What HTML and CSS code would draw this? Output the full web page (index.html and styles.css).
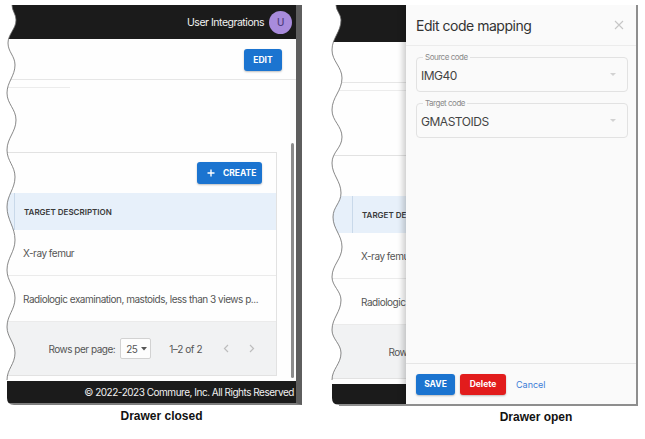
FILE: index.html
```html
<!DOCTYPE html>
<html lang="en">
<head>
<meta charset="utf-8">
<title>Code mapping drawer</title>
<link rel="stylesheet" href="styles.css">
</head>
<body>
<div class="figures">
  <figure class="fig fig-closed">
    <div class="shot shot-closed">
      <div class="page">
        <header class="topbar">
          <span class="user-name">User Integrations</span>
          <span class="avatar">U</span>
        </header>
        <div class="toolbar"><button class="btn btn-edit">EDIT</button></div>
        <div class="tabline"></div>
        <section class="card">
          <div class="card-actions">
            <button class="btn btn-create"><svg width="8" height="8" viewBox="0 0 8 8"><path d="M4 0.5v7M0.5 4h7" stroke="#fff" stroke-width="1.4"/></svg><span>CREATE</span></button>
          </div>
          <div class="row row-head"><div class="lead"></div><div class="cell">TARGET DESCRIPTION</div></div>
          <div class="row"><div class="lead"></div><div class="cell">X-ray femur</div></div>
          <div class="row"><div class="lead"></div><div class="cell">Radiologic examination, mastoids, less than 3 views p...</div></div>
          <div class="pager">
            <span class="pager-label">Rows per page:</span>
            <span class="pager-select">25<svg width="6" height="4" viewBox="0 0 6 4"><path d="M0 0h6L3 3.5z" fill="#555"/></svg></span>
            <span class="pager-count">1–2 of 2</span>
            <svg class="chev" width="6" height="9" viewBox="0 0 6 9"><path d="M5 1L1.5 4.5 5 8" fill="none" stroke="#bdbdbd" stroke-width="1.2"/></svg>
            <svg class="chev" width="6" height="9" viewBox="0 0 6 9"><path d="M1 1l3.5 3.5L1 8" fill="none" stroke="#bdbdbd" stroke-width="1.2"/></svg>
          </div>
        </section>
        <footer class="page-footer">© 2022-2023 Commure, Inc. All Rights Reserved</footer>
      </div>
      <div class="scroll-thumb"></div>
    </div>
    <svg class="torn" width="30" height="410" viewBox="0 0 30 410">
      <path class="torn-fill" d="M0,0 H12 V5 C12,11 16,14 16,20 C16,29 8,34 8,43 C8,52 15,56 15,65 C15,76 7,82 7,93 C7,104 16,109 16,120 C16,132 7,138 7,150 C7,161 15,166 15,177 C15,189 7,195 7,207 C7,220 15,227 15,240 C15,252 7,258 7,270 C7,281 15,287 15,298 C15,310 7,315 7,327 C7,337 15,343 15,353 C15,364 7,369 7,380 L7,398 Q7,405 14,405 V410 H0 Z"/>
      <path class="torn-line" d="M12,5 C12,11 16,14 16,20 C16,29 8,34 8,43 C8,52 15,56 15,65 C15,76 7,82 7,93 C7,104 16,109 16,120 C16,132 7,138 7,150 C7,161 15,166 15,177 C15,189 7,195 7,207 C7,220 15,227 15,240 C15,252 7,258 7,270 C7,281 15,287 15,298 C15,310 7,315 7,327 C7,337 15,343 15,353 C15,364 7,369 7,380"/>
    </svg>
    <figcaption class="caption">Drawer closed</figcaption>
  </figure>

  <figure class="fig fig-open">
    <div class="shot shot-open">
      <div class="page">
        <header class="topbar"></header>
        <div class="toolbar"></div>
        <div class="tabline"></div>
        <section class="card">
          <div class="card-actions"></div>
          <div class="row row-head"><div class="lead"></div><div class="cell">TARGET DESCRIPTION</div></div>
          <div class="row"><div class="lead"></div><div class="cell">X-ray femur</div></div>
          <div class="row"><div class="lead"></div><div class="cell">Radiologic examination</div></div>
          <div class="pager">
            <span class="pager-label">Rows per page:</span>
            <span class="pager-select">25<svg width="6" height="4" viewBox="0 0 6 4"><path d="M0 0h6L3 3.5z" fill="#555"/></svg></span>
            <span class="pager-count">1–2 of 2</span>
            <svg class="chev" width="6" height="9" viewBox="0 0 6 9"><path d="M5 1L1.5 4.5 5 8" fill="none" stroke="#bdbdbd" stroke-width="1.2"/></svg>
            <svg class="chev" width="6" height="9" viewBox="0 0 6 9"><path d="M1 1l3.5 3.5L1 8" fill="none" stroke="#bdbdbd" stroke-width="1.2"/></svg>
          </div>
        </section>
        <footer class="page-footer"></footer>
      </div>

      <aside class="drawer">
        <div class="drawer-head">
          <h2 class="drawer-title">Edit code mapping</h2>
          <svg class="drawer-close" width="10" height="10" viewBox="0 0 10 10"><path d="M1 1l8 8M9 1l-8 8" stroke="#c6c6c6" stroke-width="1.1"/></svg>
        </div>
        <div class="drawer-body">
          <div class="field">
            <span class="field-label">Source code</span>
            <span class="field-value">IMG40</span>
            <svg class="field-caret" width="6" height="4" viewBox="0 0 6 4"><path d="M0 0h6L3 3z" fill="#d2d2d2"/></svg>
          </div>
          <div class="field">
            <span class="field-label">Target code</span>
            <span class="field-value">GMASTOIDS</span>
            <svg class="field-caret" width="6" height="4" viewBox="0 0 6 4"><path d="M0 0h6L3 3z" fill="#d2d2d2"/></svg>
          </div>
        </div>
        <div class="drawer-foot">
          <button class="btn btn-save">SAVE</button>
          <button class="btn btn-delete">Delete</button>
          <button class="btn-text">Cancel</button>
        </div>
      </aside>
    </div>
    <svg class="torn" width="30" height="410" viewBox="318 0 30 410">
      <path class="torn-fill" d="M318,0 H336 V5 C336,11 341,14 341,20 C341,32 332,38 332,50 C332,61 342,67 342,78 C342,91 332,97 332,110 C332,121 342,126 342,137 C342,148 332,152 332,163 C332,175 341,181 341,193 C341,203 333,207 333,217 C333,229 342,235 342,247 C342,259 332,265 332,277 C332,286 341,291 341,300 C341,312 332,318 332,330 C332,339 341,344 341,353 C341,364 332,369 332,380 L332,398 Q332,405 339,405 V410 H318 Z"/>
      <path class="torn-line" d="M336,5 C336,11 341,14 341,20 C341,32 332,38 332,50 C332,61 342,67 342,78 C342,91 332,97 332,110 C332,121 342,126 342,137 C342,148 332,152 332,163 C332,175 341,181 341,193 C341,203 333,207 333,217 C333,229 342,235 342,247 C342,259 332,265 332,277 C332,286 341,291 341,300 C341,312 332,318 332,330 C332,339 341,344 341,353 C341,364 332,369 332,380"/>
    </svg>
    <figcaption class="caption caption-open">Drawer open</figcaption>
  </figure>
</div>
</body>
</html>
```

FILE: styles.css
```css
* { box-sizing: border-box; }

body {
  margin: 0;
  background: #ffffff;
  font-family: Inter, "Noto Sans", sans-serif;
  letter-spacing: -0.03em;
}

.figures {
  display: flex;
  width: 645px;
  height: 439px;
}

.fig {
  position: relative;
  margin: 0;
}

.fig-closed { width: 318px; padding: 5px 0 0 5px; }
.fig-open { width: 327px; padding: 5px 0 0 12px; }

.shot {
  position: relative;
  overflow: hidden;
  background: #fefefe;
}

.shot-closed {
  width: 297px;
  height: 400px;
  border-right: 6px solid #5e5e5e;
  border-bottom: 2px solid #7f7f7f;
  --bar-h: 34px;
  --lead: 9px;
  --tab-w: 65px;
  --foot-h: 22px;
}

.shot-open {
  width: 308px;
  height: 401px;
  border-right: 2px solid #8e8e8e;
  border-bottom: 2px solid #8e8e8e;
  --bar-h: 37px;
  --lead: 22px;
  --tab-w: 100%;
  --foot-h: 20px;
}

.page {
  display: flex;
  flex-direction: column;
  height: 100%;
}

/* top bar */
.topbar {
  height: var(--bar-h);
  flex: none;
  background: #1b1b1b;
  display: flex;
  align-items: center;
  justify-content: flex-end;
  gap: 5px;
  padding-right: 4px;
}

.user-name {
  color: #f2f2f2;
  font-size: 10.5px;
}

.avatar {
  width: 23px;
  height: 23px;
  border-radius: 50%;
  background: #a88bdc;
  color: #4f3c7e;
  font-size: 10px;
  font-weight: 500;
  display: flex;
  align-items: center;
  justify-content: center;
}

/* toolbar */
.toolbar {
  height: 41px;
  flex: none;
  display: flex;
  justify-content: flex-end;
  align-items: flex-start;
  padding: 10px 14px 0 0;
  border-bottom: 1px solid #e6e6e6;
}

.tabline {
  flex: none;
  width: var(--tab-w);
  height: 1px;
  margin-top: 7px;
  background: #ececec;
}

.btn {
  height: 22px;
  border: 0;
  border-radius: 3px;
  background: #1b74d0;
  color: #ffffff;
  font-family: Inter, "Noto Sans", sans-serif;
  font-size: 8.5px;
  font-weight: 700;
  letter-spacing: 0;
  padding: 0 9px;
  box-shadow: 0 1px 2px rgba(0, 0, 0, 0.25);
  display: inline-flex;
  align-items: center;
}

.btn-edit { width: 38px; justify-content: center; }

.btn-create {
  width: 65px;
  gap: 8px;
  padding: 0 0 0 10px;
}

/* card */
.card {
  flex: none;
  margin-top: 64px;
  margin-right: 19px;
  border: 1px solid #e2e2e2;
  border-left: 0;
  background: #fefefe;
}

.card-actions {
  height: 40px;
  display: flex;
  justify-content: flex-end;
  align-items: flex-start;
  padding: 9px 14px 0 0;
}

.row {
  display: grid;
  grid-template-columns: var(--lead) 1fr;
  height: 46px;
  border-bottom: 1px solid #ebebeb;
}

.row-head {
  height: 37px;
  background: #e7f0fa;
  border-bottom: 0;
}

.row-head .cell {
  border-left: 1px solid #c9d9ea;
  font-size: 8px;
  font-weight: 600;
  color: #3a3a3a;
  letter-spacing: 0;
}

.cell {
  display: flex;
  align-items: center;
  padding-left: 9px;
  white-space: nowrap;
  overflow: hidden;
  font-size: 10px;
  color: #555555;
}

.pager {
  height: 53px;
  background: #f1f2f3;
  display: flex;
  justify-content: flex-end;
  align-items: center;
  padding-right: 21px;
  font-size: 10px;
  color: #555555;
}

.pager-label { margin-right: 5px; }

.pager-select {
  width: 31px;
  height: 21px;
  border: 1px solid #d2d2d2;
  border-radius: 2px;
  background: #fdfdfd;
  display: flex;
  align-items: center;
  gap: 4px;
  padding-left: 5px;
  margin-right: 18px;
}

.pager-count { margin-right: 21px; }

.chev + .chev { margin-left: 20px; }

.page-footer {
  height: var(--foot-h);
  flex: none;
  margin-top: auto;
  background: #1b1b1b;
  color: #f0f0f0;
  font-size: 10px;
  display: flex;
  align-items: center;
  justify-content: flex-end;
  padding-right: 2px;
}

.scroll-thumb {
  position: absolute;
  left: 286px;
  top: 138px;
  width: 3px;
  height: 235px;
  border-radius: 2px;
  background: #8c8c8c;
}

/* torn edge overlay */
.torn {
  position: absolute;
  left: 0;
  top: 0;
}

.torn-fill { fill: #ffffff; }

.torn-line {
  fill: none;
  stroke: #6a6a6a;
  stroke-width: 0.8;
}

/* drawer */
.drawer {
  position: absolute;
  top: 0;
  right: 0;
  bottom: 0;
  width: 230px;
  background: #fafafa;
  box-shadow: -3px 0 6px rgba(0, 0, 0, 0.2);
  display: flex;
  flex-direction: column;
}

.drawer-head {
  height: 41px;
  flex: none;
  display: flex;
  align-items: center;
  justify-content: space-between;
  padding: 0 12px 0 10px;
  border-bottom: 1px solid #ececec;
}

.drawer-title {
  margin: 0;
  font-size: 14px;
  font-weight: 400;
  color: #333333;
}

.drawer-body {
  flex: 1;
  display: flex;
  flex-direction: column;
  gap: 11px;
  padding: 11px 8px 0 10px;
}

.field {
  position: relative;
  height: 35px;
  border: 1px solid #e2e2e2;
  border-radius: 4px;
  display: flex;
  align-items: center;
  justify-content: space-between;
  padding: 1px 11px 0 4px;
}

.field-label {
  position: absolute;
  top: -6px;
  left: 6px;
  padding: 0 2px;
  background: #fafafa;
  font-size: 8px;
  line-height: 10px;
  color: #8a8a8a;
}

.field-value {
  font-size: 12px;
  color: #444444;
}

.drawer-foot {
  height: 41px;
  flex: none;
  border-top: 1px solid #e6e6e6;
  display: flex;
  align-items: center;
  gap: 5px;
  padding: 0 0 0 10px;
}

.btn-save {
  width: 39px;
  height: 21px;
  justify-content: center;
  padding: 0;
}

.btn-delete {
  width: 46px;
  height: 21px;
  justify-content: center;
  padding: 0;
  background: #e21c1c;
}

.btn-text {
  border: 0;
  background: none;
  padding: 0 5px;
  font-family: Inter, "Noto Sans", sans-serif;
  font-size: 9px;
  color: #3b7dd8;
}

/* captions */
.caption {
  margin-top: 4px;
  font-family: "Liberation Sans", Arial, sans-serif;
  font-weight: 700;
  font-size: 12px;
  line-height: 14px;
  letter-spacing: 0;
  color: #111111;
  text-align: center;
}

.caption-open { padding-left: 97px; }
```
